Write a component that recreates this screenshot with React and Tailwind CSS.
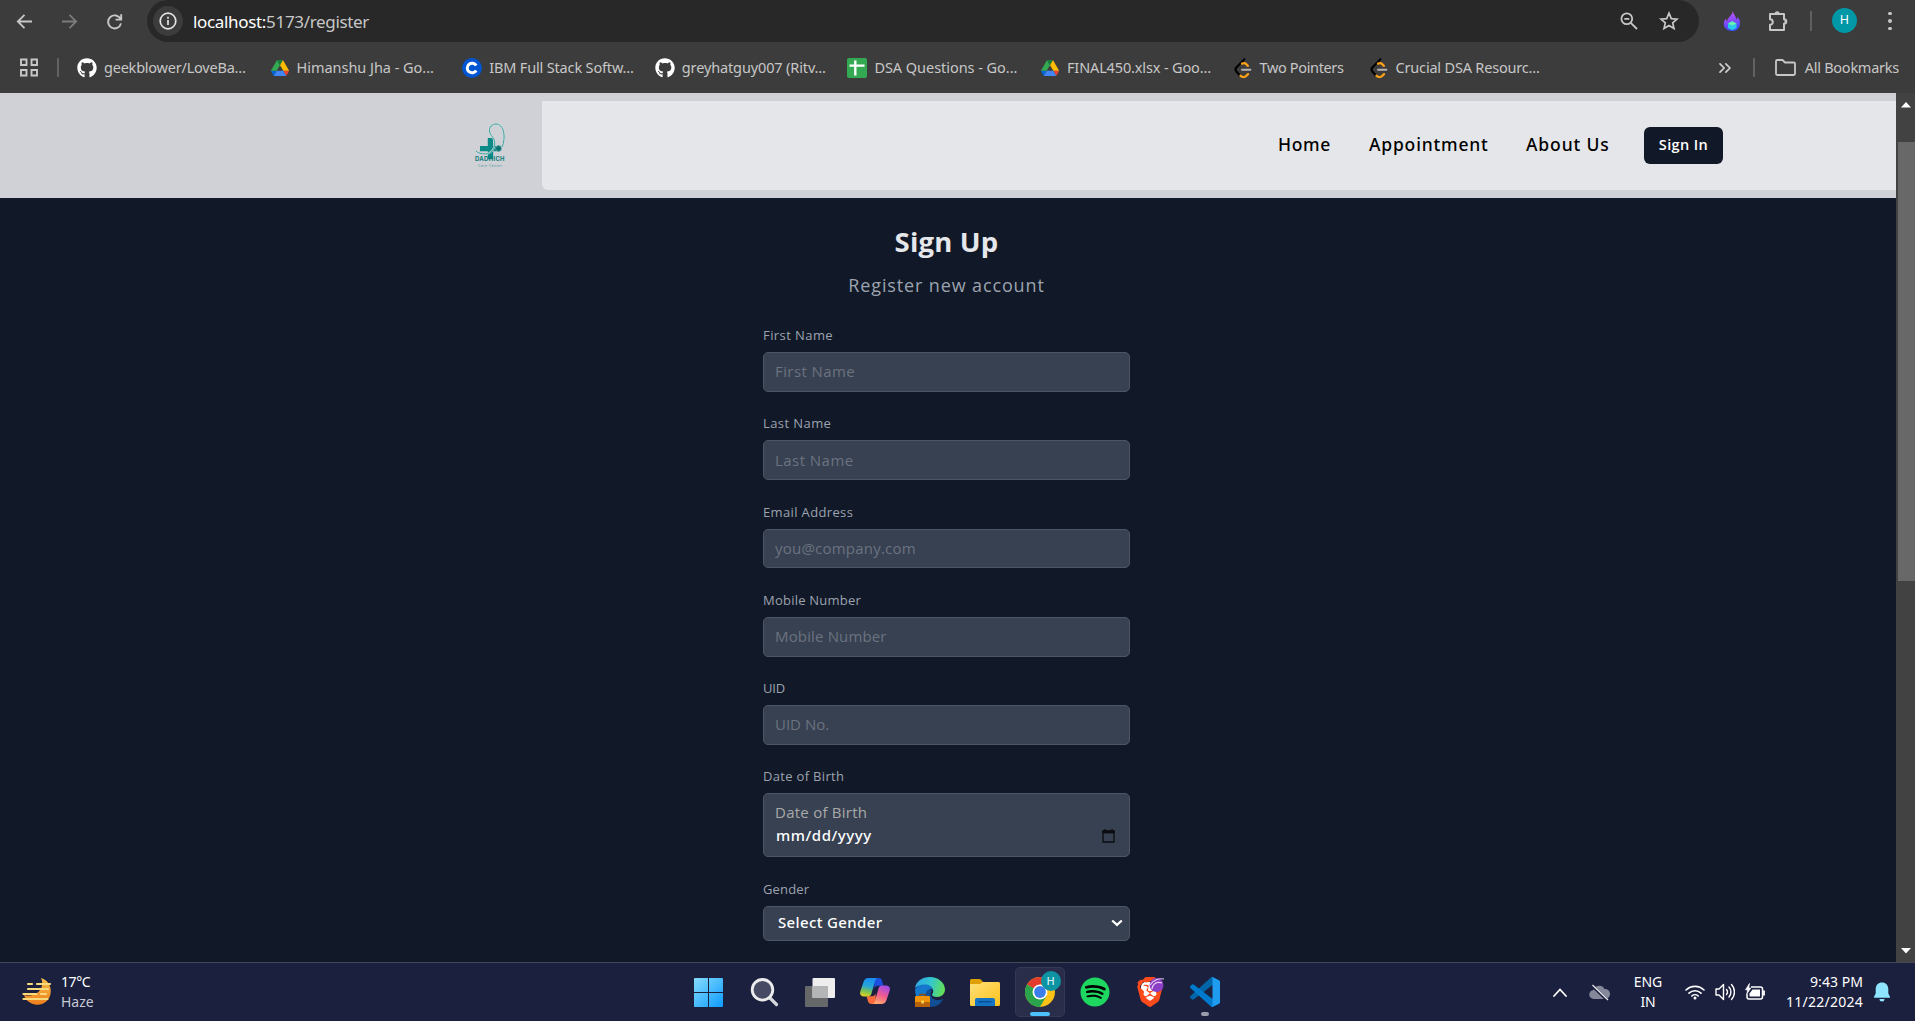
import React from "react";
import { FaGithub, FaSpotify } from "react-icons/fa";
import { SiBrave } from "react-icons/si";
import { ChevronsRight } from "lucide-react";

/* ---------- small icons ---------- */

const DriveIcon = () => (
  <svg width="18" height="16" viewBox="0 0 87.3 78">
    <path d="m6.6 66.85 3.85 6.65c.8 1.4 1.95 2.5 3.3 3.3l13.75-23.8h-27.5c0 1.55.4 3.1 1.2 4.5z" fill="#0066da" />
    <path d="m43.65 25-13.75-23.8c-1.35.8-2.5 1.9-3.3 3.3l-25.4 44a9.06 9.06 0 0 0 -1.2 4.5h27.5z" fill="#34a853" />
    <path d="m73.55 76.8c1.35-.8 2.5-1.9 3.3-3.3l1.6-2.75 7.65-13.25c.8-1.4 1.2-2.95 1.2-4.5h-27.5l5.85 11.5z" fill="#ea4335" />
    <path d="m43.65 25 13.75-23.8c-1.35-.8-2.9-1.2-4.5-1.2h-18.5c-1.6 0-3.15.45-4.5 1.2z" fill="#188038" />
    <path d="m59.8 53h-32.3l-13.75 23.8c1.35.8 2.9 1.2 4.5 1.2h50.8c1.6 0 3.15-.45 4.5-1.2z" fill="#4285f4" />
    <path d="m73.4 26.5-12.7-22c-.8-1.4-1.95-2.5-3.3-3.3l-13.75 23.8 16.15 28h27.45c0-1.55-.4-3.1-1.2-4.5z" fill="#fbbc04" />
  </svg>
);

const CourseraIcon = () => (
  <svg width="20" height="20" viewBox="0 0 20 20">
    <circle cx="10" cy="10" r="10" fill="#0056d2" />
    <path d="M14.2 7.6A4.8 4.8 0 1 0 14.2 12.4" fill="none" stroke="#fff" strokeWidth="3" />
  </svg>
);

const SheetIcon = () => (
  <svg width="20" height="20" viewBox="0 0 20 20">
    <rect width="20" height="20" rx="2" fill="#34a853" />
    <path d="M8.3 2.5v15M2.5 7.6h15" stroke="#fff" strokeWidth="2.4" />
  </svg>
);

const LeetIcon = () => (
  <svg width="18" height="20" viewBox="0 0 18 20" fill="none" strokeLinecap="round" strokeWidth="2.2">
    <path d="M10.4 1.2 2.4 9.6a3 3 0 0 0 0 4l3.3 3.6" stroke="#000" />
    <path d="m8 5.6 1.5-.4a2.6 2.6 0 0 1 2.4.7l2 2" stroke="#ffa116" />
    <path d="m6.5 17.6.5.5a4 4 0 0 0 5 0l2-2" stroke="#ffa116" />
    <path d="M8 11.8h8.4" stroke="#b3b3b3" strokeWidth="2" />
  </svg>
);

const SITES = [
  { label: "geekblower/LoveBa...", icon: <FaGithub size={20} color="#fff" />, ls: "tracking-[-0.22px]" },
  { label: "Himanshu Jha - Go...", icon: <DriveIcon />, ls: "tracking-[-0.04px]" },
  { label: "IBM Full Stack Softw...", icon: <CourseraIcon />, ls: "tracking-[-0.16px]" },
  { label: "greyhatguy007 (Ritv...", icon: <FaGithub size={20} color="#fff" />, ls: "tracking-[-0.13px]" },
  { label: "DSA Questions - Go...", icon: <SheetIcon />, ls: "tracking-[-0.04px]" },
  { label: "FINAL450.xlsx - Goo...", icon: <DriveIcon />, ls: "tracking-[-0.14px]" },
  { label: "Two Pointers", icon: <LeetIcon />, ls: "tracking-[-0.36px]", w: "w-[136px]" },
  { label: "Crucial DSA Resourc...", icon: <LeetIcon />, ls: "tracking-[-0.19px]" },
];

/* ---------- browser chrome ---------- */

function Toolbar() {
  return (
    <div className="flex h-[42px] items-center">
      <div className="ml-[16px] flex w-[131px] items-center gap-[28px]">
        <svg width="17" height="17" viewBox="0 0 17 17" fill="none" stroke="#c7c7c7" strokeWidth="1.8">
          <path d="M16 8.5H2M8.5 1.8 1.8 8.5l6.7 6.7" />
        </svg>
        <svg width="17" height="17" viewBox="0 0 17 17" fill="none" stroke="#7b7b7b" strokeWidth="1.8">
          <path d="M1 8.5h14M8.5 1.8l6.7 6.7-6.7 6.7" />
        </svg>
        <svg width="17" height="17" viewBox="0 0 17 17" fill="none" stroke="#c7c7c7" strokeWidth="1.9">
          <path d="M14.6 6.2A6.5 6.5 0 1 0 15 10.4M15.2 1.2v5.4H9.6" />
        </svg>
      </div>
      <div className="flex h-[42px] w-[1552px] items-center rounded-[21px] bg-[#282828] pr-[20px] pl-[6px]">
        <div className="flex h-[30px] w-[30px] items-center justify-center rounded-full bg-[#3c3c3c]">
          <svg width="18" height="18" viewBox="0 0 18 18" fill="none" stroke="#e3e3e3" strokeWidth="1.7">
            <circle cx="9" cy="9" r="7.8" />
            <path d="M9 8v5M9 4.8v1.9" />
          </svg>
        </div>
        <div className="mt-px ml-[10px] text-[17px] tracking-[-0.33px] text-[#c7c7c7]">
          <span className="text-white">localhost:</span>5173/register
        </div>
        <svg className="ml-auto" width="18" height="18" viewBox="0 0 18 18" fill="none" stroke="#c7c7c7" strokeWidth="1.8">
          <circle cx="6.8" cy="6.8" r="5.4" />
          <path d="m10.8 10.8 6.2 6.2M4.3 6.8h5" />
        </svg>
        <svg className="ml-[21px]" width="20" height="20" viewBox="0 0 20 20" fill="none" stroke="#c7c7c7" strokeWidth="1.7">
          <path d="m10 2.2 2.3 5.400 5.800.5-4.400 3.800 1.300 5.700-5-3-5 3 1.300-5.700-4.400-3.800 5.800-.5z" />
        </svg>
      </div>
      <svg className="ml-[24px]" width="18" height="20" viewBox="0 0 18 20">
        <defs>
          <linearGradient id="flame" x1="0" y1="0" x2="0.2" y2="1">
            <stop offset="0" stopColor="#c95bf0" />
            <stop offset="0.55" stopColor="#8a4bfa" />
            <stop offset="1" stopColor="#3b4df5" />
          </linearGradient>
        </defs>
        <path d="M9.5 0c1 3.5 3.6 5 4 8.600.8-.7 1-1.800.9-2.800C16.500 8 17.400 10.500 17 13.400 16.400 17.600 13 20 9 20S1 17.500.8 13.300C.6 10.600 2 8.700 3 7.600c.1 1.300.5 2.200 1.200 2.800C4.500 6 9.800 4.500 9.500 0z" fill="url(#flame)" />
        <path d="m9.200 10.200 4.300 2.200v4.600l-4.300 2.200L5 17v-4.600z" fill="#28c9e8" />
        <path d="m9.200 10.200 4.300 2.200-4.300 2.200L5 12.400z" fill="#6ff0b0" />
      </svg>
      <svg className="ml-[27px]" width="21" height="22" viewBox="0 0 21 22" fill="none" stroke="#c7c7c7" strokeWidth="2" strokeLinejoin="round">
        <path d="M2 4h14v5.200a2 2 0 0 1 0 4.600V20H2v-5.200a2.800 2.800 0 0 0 0-5.600z" />
        <path d="M6.800 4a2.300 2.300 0 0 1 4.600 0zM16.500 9.300a2.300 2.300 0 0 1 0 4.500z" fill="#c7c7c7" stroke="none" />
        <path d="M7.300 3.500a1.900 1.900 0 0 1 3.700 0" strokeWidth="1.5" />
      </svg>
      <div className="ml-[21px] h-[20px] w-[2px] bg-[#5f5f5f]" />
      <div className="mb-px ml-[20px] flex h-[25px] w-[25px] items-center justify-center rounded-full bg-[#0097a7] text-[12.5px] text-white">H</div>
      <div className="ml-[31px] flex flex-col gap-[4px]">
        <div className="h-[3.5px] w-[3.5px] rounded-full bg-[#c7c7c7]" />
        <div className="h-[3.5px] w-[3.5px] rounded-full bg-[#c7c7c7]" />
        <div className="h-[3.5px] w-[3.5px] rounded-full bg-[#c7c7c7]" />
      </div>
    </div>
  );
}

function BookmarksBar() {
  return (
    <div className="flex h-[51px] items-center text-[14.5px] text-[#c7c7c7]">
      <svg className="ml-[20px]" width="18" height="19" viewBox="0 0 18 19" fill="none" stroke="#c7c7c7" strokeWidth="1.9">
        <path d="M1 1.500h5.500v5.500H1zM11.500 1.500H17v5.500h-5.500zM1 12h5.500v5.500H1zM11.500 12H17v5.500h-5.500z" />
      </svg>
      <div className="ml-[19px] h-[19px] w-[2px] rounded bg-[#636363]" />
      <div className="ml-[18px] flex items-center">
        {SITES.map((s) => (
          <div key={s.label} className={`flex shrink-0 items-center ${s.w || "w-[192.6px]"}`}>
            <div className="flex w-[20px] justify-center">{s.icon}</div>
            <div className={`ml-[7px] whitespace-nowrap ${s.ls}`}>{s.label}</div>
          </div>
        ))}
      </div>
      <ChevronsRight className="ml-auto text-[#d0d0d0]" size={20} strokeWidth={2} />
      <div className="ml-[18px] h-[19px] w-[2px] rounded bg-[#636363]" />
      <svg className="ml-[20px]" width="21" height="17" viewBox="0 0 21 17" fill="none" stroke="#c7c7c7" strokeWidth="1.8" strokeLinejoin="round">
        <path d="M1 2.200C1 1.500 1.500 1 2.200 1h5.300l2.500 2.500h8.800c.7 0 1.200.5 1.200 1.200v10.100c0 .7-.5 1.200-1.200 1.200H2.200C1.500 16 1 15.500 1 14.800z" />
      </svg>
      <div className="mr-[16px] ml-[9px] tracking-[-0.25px] whitespace-nowrap">All Bookmarks</div>
    </div>
  );
}

/* ---------- page ---------- */

const Logo = () => (
  <svg width="34" height="48" viewBox="472 121 34 48" fill="none">
    <path d="M487.800 138h5.400v8h3.500v5.200h-3.500v8h-5.400v-8H480V146h7.800z" fill="#0c8a88" />
    <path d="M502 147c2-4.500 2.600-10 1.700-14.500-1-5.500-4-8.500-7.700-8.500-4 0-6.800 3-6.500 7 .3 4.500 5.500 6.500 5.300 13-.2 5-3.500 9.500-9 9.900-4 .3-8-.8-10-3" stroke="#cfe0e2" strokeWidth="1.8" />
    <path d="M502 147c2-4.500 2.600-10 1.700-14.500-1-5.500-4-8.500-7.700-8.500-4 0-6.800 3-6.500 7 .3 4.500 5.500 6.500 5.300 13-.2 5-3.500 9.500-9 9.900-4 .3-8-.8-10-3" stroke="#2a9895" strokeWidth="0.9" />
    <circle cx="498.5" cy="148.5" r="2.9" fill="#0a6f70" stroke="#5aa9a9" strokeWidth="0.8" />
    <text x="475" y="161" fontSize="5.900" fontWeight="700" textLength="29.5" fill="#0b7b7a" fontFamily="Inter">DADHICH</text>
    <text x="478" y="166.800" fontSize="3.400" textLength="24" fill="#4f9a9b" fontFamily="Inter">Care Center</text>
  </svg>
);

function Header() {
  return (
    <header className="flex h-[105px] w-full bg-[#d0d1d6]">
      <div className="w-[472px] shrink-0" />
      <div className="w-[70px] shrink-0 pt-[28px]">
        <Logo />
      </div>
      <nav className="mt-[8px] flex h-[89px] flex-1 items-center rounded-bl-[6px] bg-[#e5e6ea] font-['Noto_Sans'] text-[17.5px] font-medium text-black">
        <span className="ml-auto w-[91px] pb-[2px] tracking-[0.6px]">Home</span>
        <span className="w-[157px] pb-[2px] tracking-[0.82px]">Appointment</span>
        <span className="w-[118px] pb-[2px] tracking-[0.88px]">About Us</span>
        <button className="mr-[173px] h-[37px] w-[79px] rounded-[6px] bg-[#111827] pb-px font-['Open_Sans'] text-[14.5px] font-semibold tracking-[0.4px] text-white">
          Sign In
        </button>
      </nav>
    </header>
  );
}

const FIELDS = [
  { label: "First Name", ph: "First Name", a: "tracking-[0.42px]", b: "placeholder:tracking-[0.42px]" },
  { label: "Last Name", ph: "Last Name", a: "tracking-[0.42px]", b: "placeholder:tracking-[0.46px]" },
  { label: "Email Address", ph: "you@company.com", a: "tracking-[0.36px]", b: "placeholder:tracking-[0.22px]" },
  { label: "Mobile Number", ph: "Mobile Number", a: "tracking-[0.23px]", b: "placeholder:tracking-[0.15px]" },
  { label: "UID", ph: "UID No.", a: "tracking-[-0.2px]", b: "placeholder:tracking-[0px]" },
];

const Label = ({ children, className }) => (
  <label className={`mb-[8px] block h-[19px] pt-px text-[13px] leading-[18px] text-[#9ca3af] ${className}`}>{children}</label>
);

function RegisterForm() {
  return (
    <main className="flex flex-1 flex-col items-center overflow-hidden bg-[#111827] pr-[3px] font-['Open_Sans']">
      <h1 className="mt-[26px] h-[36px] text-[27.5px] leading-[36px] font-bold tracking-[0.2px] text-[#e5e7eb]">Sign Up</h1>
      <p className="mt-[11px] h-[28px] text-[18px] leading-[28px] tracking-[0.87px] text-[#9ca3af]">Register new account</p>
      <form className="mt-[26px] flex w-[367px] flex-col gap-[21.5px]">
        {FIELDS.map((f) => (
          <div key={f.label}>
            <Label className={f.a}>{f.label}</Label>
            <input
              placeholder={f.ph}
              className={`block h-[39.75px] w-full rounded-[5px] border border-[#4b5563] bg-[#374151] px-[11px] pb-px text-[15px] text-white placeholder:text-[#6b7280] ${f.b}`}
            />
          </div>
        ))}
        <div>
          <Label className="tracking-[0.32px]">Date of Birth</Label>
          <div className="flex h-[64px] flex-col rounded-[5px] border border-[#4b5563] bg-[#374151] pt-[7px] pr-[14px] pl-[12px]">
            <span className="-ml-px h-[23px] text-[15px] leading-[23px] tracking-[0.25px] text-[#a9a9a9]">Date of Birth</span>
            <div className="flex h-[23px] items-center justify-between">
              <span className="font-['Noto_Sans'] text-[15px] leading-[23px] font-medium tracking-[0.55px] text-white">mm/dd/yyyy</span>
              <svg width="13" height="14" viewBox="0 0 13 14" fill="none" stroke="#0a0c10">
                <path d="M1 2h11v11H1z" strokeWidth="1.3" />
                <path d="M.4 3h12.200" strokeWidth="2.8" />
                <path d="M3 0v2M10 0v2" strokeWidth="1.4" />
              </svg>
            </div>
          </div>
        </div>
        <div>
          <Label className="tracking-[0.15px]">Gender</Label>
          <div className="flex h-[35px] items-center justify-between rounded-[5px] border border-[#4b5563] bg-[#374151] pr-[6px] pl-[14px]">
            <span className="pb-[2px] font-['Noto_Sans'] text-[15px] leading-[23px] font-medium tracking-[0.36px] text-white">Select Gender</span>
            <svg width="12" height="8" viewBox="0 0 12 8" fill="none" stroke="#fff" strokeWidth="2.2">
              <path d="m1.200 1.500 4.800 4.400 4.800-4.400" />
            </svg>
          </div>
        </div>
      </form>
    </main>
  );
}

function Scrollbar() {
  return (
    <div className="flex w-[19px] flex-col items-center bg-[#424242]">
      <svg className="mt-[9px]" width="10" height="6" viewBox="0 0 10 6"><path d="M5 0l5 5.500H0z" fill="#fff" /></svg>
      <div className="mt-[34px] ml-[2px] h-[439px] w-[17px] bg-[#686868]" />
      <svg className="mt-auto mb-[8px]" width="10" height="6" viewBox="0 0 10 6"><path d="M5 5.500L0 0h10z" fill="#fff" /></svg>
    </div>
  );
}

/* ---------- taskbar ---------- */

const Haze = () => (
  <svg width="32" height="30" viewBox="0 0 32 30" fill="none">
    <defs>
      <linearGradient id="moon" x1="0" y1="0" x2="0" y2="1">
        <stop offset="0" stopColor="#f8c04a" />
        <stop offset="1" stopColor="#ee7d1c" />
      </linearGradient>
    </defs>
    <path d="M20 1c7 2 11 9 9.500 16C28 24.500 21 29 14 27.500 8.500 26.500 4.500 23 3 18c7 2 14-1 17-6.500 1.700-3.200 1.700-7.500 0-10.500z" fill="url(#moon)" />
    <path d="M7 7h4M16 7h13M7 12h20M2.500 17h13M20 17h5M2.500 22h24" stroke="#f6da7c" strokeWidth="2.2" strokeLinecap="round" />
  </svg>
);

const WindowsIcon = () => (
  <svg width="29" height="29" viewBox="0 0 29 29">
    <defs>
      <linearGradient id="win" x1="0" y1="0" x2="1" y2="1">
        <stop offset="0" stopColor="#86dcfd" />
        <stop offset="1" stopColor="#0d9bff" />
      </linearGradient>
    </defs>
    <path d="M1 0h13v14H0V1a1 1 0 0 1 1-1zM15 0h13a1 1 0 0 1 1 1v13H15zM0 15h14v14H1a1 1 0 0 1-1-1zM15 15h14v13a1 1 0 0 1-1 1H15z" fill="url(#win)" />
  </svg>
);

const SearchIcon = () => (
  <svg className="ml-[2px]" width="29" height="29" viewBox="0 0 29 29" fill="none">
    <path d="m20 20 6.500 6.500" stroke="#d5d6da" strokeWidth="3.2" strokeLinecap="round" />
    <circle cx="12.5" cy="11.8" r="10.3" fill="#464a62" stroke="#ececee" strokeWidth="2.8" />
  </svg>
);

const TaskViewIcon = () => (
  <svg className="ml-[2px]" width="30" height="29" viewBox="0 0 30 29">
    <rect x="0" y="8" width="23" height="21" rx="1" fill="#666769" />
    <rect x="7.5" y="0" width="22.5" height="20" rx="1" fill="#eeeeef" />
    <rect x="7.5" y="8" width="15.5" height="12" fill="#b4b5b7" />
  </svg>
);

const CopilotIcon = () => (
  <svg className="mb-[2px] ml-[2px]" width="30" height="28" viewBox="0 0 30 28">
    <defs>
      <linearGradient id="cpa" x1="0.3" y1="0" x2="0.1" y2="1">
        <stop offset="0" stopColor="#1b8ff0" />
        <stop offset="0.4" stopColor="#27a6d8" />
        <stop offset="0.7" stopColor="#7fc34f" />
        <stop offset="1" stopColor="#f4d01f" />
      </linearGradient>
      <linearGradient id="cpb" x1="0.7" y1="0" x2="0.3" y2="1">
        <stop offset="0" stopColor="#a24bea" />
        <stop offset="0.5" stopColor="#ef5a8e" />
        <stop offset="1" stopColor="#ffab6b" />
      </linearGradient>
    </defs>
    <path d="M14 1h4.500c2 0 3 1 3.500 2.700l1.500 5H18c-2 0-3 1-3.500 3z" fill="#1c4fe0" />
    <path d="M16 27h-4.500c-2 0-3-1-3.500-2.700l-1.500-5H12c2 0 3-1 3.500-3z" fill="#fb6a3b" />
    <path d="M8.500 1H18c-1.500 0-2.500 1-3 3l-3.500 12.500c-.6 2-1.600 3-3.600 3H4c-3 0-4.500-2-3.700-5L3.500 5C4.300 2.300 6 1 8.500 1z" fill="url(#cpa)" />
    <path d="M21.500 27H12c1.500 0 2.500-1 3-3l3.500-12.500c.6-2 1.600-3 3.600-3H26c3 0 4.500 2 3.700 5L26.500 23c-.8 2.700-2.500 4-5 4z" fill="url(#cpb)" />
  </svg>
);

const EdgeIcon = () => (
  <svg className="ml-[2px]" width="30" height="30" viewBox="0 0 30 30">
    <defs>
      <linearGradient id="eda" x1="0" y1="0.3" x2="1" y2="0.5">
        <stop offset="0" stopColor="#2ea7e6" />
        <stop offset="0.5" stopColor="#33c6cf" />
        <stop offset="1" stopColor="#63e055" />
      </linearGradient>
    </defs>
    <path d="M12 11c-4 7-1 15 4 19 5 0 10-3 12-8-4 2-9 1.500-11.500-2-2-3 0-5 0-7z" fill="#104f94" />
    <path d="M0 11C1 4.500 7 0 15 0s15 5.500 15 12.500c0 4.500-3.500 7.500-8 7.500-3.500 0-5-1.200-5-2.200 0-.8 1.200-1.300 1.200-3.500C18.200 10.500 14.500 8 10 8 5 8 1.500 9.500 0 11z" fill="url(#eda)" />
    <path d="M0 12.500C2 9 6 7.500 10 7.500c4 0 7 2 8 5-5-2-8 2-7.500 8L15 30C6 29 0 21.500 0 12.500z" fill="#1479cc" />
    <path d="M5 19.500v-2h5v2" fill="none" stroke="#8a4b06" strokeWidth="1.4" />
    <rect x="0" y="19" width="15" height="11" rx="1" fill="#ef9409" />
    <rect x="0" y="25" width="15" height="5" rx="1" fill="#b5620a" />
    <rect x="6.3" y="23.5" width="2.6" height="3" fill="#ffd45a" />
  </svg>
);

const FolderIcon = () => (
  <svg width="30" height="27" viewBox="0 0 30 27">
    <defs>
      <linearGradient id="fold" x1="0" y1="0" x2="1" y2="1">
        <stop offset="0" stopColor="#ffdf78" />
        <stop offset="1" stopColor="#fcc21b" />
      </linearGradient>
    </defs>
    <path d="M0 1.500C0 .6.600 0 1.500 0H9c1 0 1.700.3 2.400 1L13 3v5H0z" fill="#e0a003" />
    <path d="M0 5h10l3-2h15.500c.9 0 1.500.6 1.500 1.500v21c0 .9-.6 1.500-1.500 1.500h-27C.6 27 0 26.400 0 25.500z" fill="url(#fold)" />
    <path d="M5 27v-6c0-1.200.8-2 2-2h16c1.200 0 2 .8 2 2v6z" fill="#1374c6" />
    <path d="M8.500 22.800h13" stroke="#0b4d8f" strokeWidth="1.4" />
  </svg>
);

const ChromeIcon = () => (
  <svg width="36" height="36" viewBox="0 0 36 36">
    <circle cx="15" cy="21" r="15" fill="#fbc116" />
    <path d="M15 21 2 13.500A15 15 0 0 1 28 13.500H15z" fill="#e33b2e" />
    <path d="M2 13.500A15 15 0 0 0 15 36l6.500-11.300L15 21z" fill="#2ba24c" />
    <circle cx="15" cy="21" r="7.5" fill="#fff" />
    <circle cx="15" cy="21" r="5.9" fill="#3b7de9" />
  </svg>
);

const BraveIcon = () => (
  <div className="relative">
    <svg className="absolute top-[5px] left-[6px]" width="18" height="20"><rect width="18" height="19" rx="5" fill="#fff" /></svg>
    <SiBrave className="relative" size={30} color="#fb4a1c" />
    <svg className="absolute -top-px left-[13px]" width="17" height="17" viewBox="0 0 17 17">
      <circle cx="8.5" cy="9" r="7" fill="#8a3fc4" />
      <path d="M2 9C5 4 11 2 16 3M4 13c0-4 4-8 10-6" fill="none" stroke="#e9c6f2" strokeWidth="1.2" />
    </svg>
  </div>
);

const CodeIcon = () => (
  <svg width="30" height="30" viewBox="0 0 100 100">
    <path d="M96.500 10.800 75.900.9a6.200 6.200 0 0 0-7.100 1.200L1.300 63.600a4.200 4.200 0 0 0 0 6.200l5.500 5a4.200 4.200 0 0 0 5.300.2l81.200-61.600c2.700-2 6.700-.1 6.700 3.300v-.2a6.200 6.200 0 0 0-3.500-5.700z" fill="#0065a9" />
    <path d="M96.500 89.200 75.900 99.100a6.200 6.200 0 0 1-7.100-1.200L1.300 36.400a4.200 4.200 0 0 1 0-6.200l5.500-5a4.200 4.200 0 0 1 5.300-.2l81.200 61.600c2.700 2 6.700.1 6.700-3.300v.2a6.200 6.200 0 0 1-3.500 5.700z" fill="#007acc" />
    <path d="M75.900 99.100a6.200 6.200 0 0 1-7.100-1.200c2.300 2.300 6.200.7 6.200-2.600V4.700c0-3.300-3.900-4.900-6.200-2.600A6.200 6.200 0 0 1 75.900.9l20.600 9.900a6.200 6.200 0 0 1 3.500 5.600v67.200a6.200 6.200 0 0 1-3.500 5.600z" fill="#1f9cf0" />
  </svg>
);

const Cell = ({ children }) => <div className="flex h-[58px] w-[55.2px] items-center justify-center">{children}</div>;

function Taskbar() {
  return (
    <footer className="flex h-[59px] items-center border-t border-[#44465a] bg-[#1b203e] text-[14px] text-white">
      <div className="flex w-[681px] items-center pl-[21px]">
        <Haze />
        <div className="ml-[8px] leading-[20px]">
          <div className="tracking-[-0.4px]">17°C</div>
          <div className="text-[#c6c8d2]">Haze</div>
        </div>
      </div>
      <Cell><WindowsIcon /></Cell>
      <Cell><SearchIcon /></Cell>
      <Cell><TaskViewIcon /></Cell>
      <Cell><CopilotIcon /></Cell>
      <Cell><EdgeIcon /></Cell>
      <Cell><FolderIcon /></Cell>
      <Cell>
        <div className="relative h-[50px] w-[50px] rounded-[5px] border border-[#343853] bg-[#292d49]">
          <div className="absolute top-[3px] left-[9px]"><ChromeIcon /></div>
          <div className="absolute top-[3px] left-[25px] flex h-[20px] w-[20px] items-center justify-center rounded-full bg-[#0d93a2] text-[11px] font-medium text-[#d4f2f5]">H</div>
          <div className="absolute top-[44px] left-[14px] h-[4px] w-[20px] rounded-full bg-[#4cc2ff]" />
        </div>
      </Cell>
      <Cell>
        <div className="flex h-[28px] w-[28px] items-center justify-center rounded-full bg-black">
          <FaSpotify size={30} color="#1ed760" className="shrink-0" />
        </div>
      </Cell>
      <Cell><BraveIcon /></Cell>
      <Cell>
        <div className="relative">
          <CodeIcon />
          <div className="absolute top-[35px] left-[11px] h-[4px] w-[8px] rounded-full bg-[#9a9bab]" />
        </div>
      </Cell>
      <div className="ml-auto flex items-center">
        <svg width="14" height="9" viewBox="0 0 14 9" fill="none" stroke="#fff" strokeWidth="1.8" strokeLinecap="round">
          <path d="m1 8 6-6.500L13 8" />
        </svg>
        <svg className="ml-[22px]" width="21" height="17" viewBox="0 0 21 17" fill="none">
          <path d="M5 15a4.500 4.500 0 0 1-.5-9A6 6 0 0 1 15.500 5 5 5 0 0 1 16.500 15z" fill="#85879a" />
          <path d="M3 1.500 18.500 16.500" stroke="#1b203e" strokeWidth="3" />
          <path d="M3.500 1 19 16" stroke="#e8e8ee" strokeWidth="1.3" />
        </svg>
        <div className="ml-[18px] w-[40px] text-center leading-[20px] tracking-[-0.1px]">
          <div>ENG</div>
          <div>IN</div>
        </div>
        <svg className="ml-[17px]" width="20" height="16" viewBox="0 0 20 16" fill="none" stroke="#fff" strokeWidth="1.6" strokeLinecap="round">
          <path d="M1 6a13 13 0 0 1 18 0M4 9.200a8.700 8.700 0 0 1 12 0M6.800 12a4.700 4.700 0 0 1 6.400 0" />
          <circle cx="10" cy="14" r="1.5" fill="#fff" stroke="none" />
        </svg>
        <svg className="ml-[10px]" width="20" height="18" viewBox="0 0 20 18" fill="none" stroke="#fff" strokeWidth="1.4" strokeLinecap="round" strokeLinejoin="round">
          <path d="M1 6h3l4.500-4.500v15L4 12H1zM11.500 6.500a4 4 0 0 1 0 5M14 4a7.500 7.500 0 0 1 0 10M16.500 1.500a11 11 0 0 1 0 15" />
        </svg>
        <svg className="ml-[10px]" width="20" height="18" viewBox="0 0 20 18" fill="none">
          <path d="M6 4h9.500a2 2 0 0 1 2 2v8a2 2 0 0 1-2 2H4a2 2 0 0 1-2-2v-3" stroke="#fff" strokeWidth="1.5" />
          <path d="M18 8h1.300v4H18z" stroke="#fff" strokeWidth="1.2" />
          <path d="M7.500 6.500H15v7H4.500v-3z" fill="#fff" />
          <path d="M4.500.5.5 6.800h2.200L1.800 11l4-6H3.700z" fill="#fff" stroke="#fff" strokeWidth="0.7" />
        </svg>
        <div className="ml-[10px] w-[88px] text-right leading-[20px]">
          <div className="tracking-[0.05px]">9:43 PM</div>
          <div className="tracking-[0.25px]">11/22/2024</div>
        </div>
        <svg className="mr-[25px] ml-[11px]" width="16" height="20" viewBox="0 0 16 20">
          <path d="M8 .5c3.700 0 6.300 2.700 6.300 6.500v4.500L16 14.800c.2.500-.1 1-.7 1H.7c-.6 0-.9-.5-.7-1l1.700-3.300V7C1.700 3.200 4.300.5 8 .5zM5.500 17h5a2.500 2.500 0 0 1-5 0z" fill="#8fe4ff" />
        </svg>
      </div>
    </footer>
  );
}

export default function App() {
  return (
    <div className="flex h-screen w-full flex-col overflow-hidden font-['Noto_Sans',sans-serif]">
      <div className="bg-[#3c3c3c]">
        <Toolbar />
        <BookmarksBar />
      </div>
      <div className="flex min-h-0 flex-1">
        <div className="flex min-w-0 flex-1 flex-col">
          <Header />
          <RegisterForm />
        </div>
        <Scrollbar />
      </div>
      <Taskbar />
    </div>
  );
}
